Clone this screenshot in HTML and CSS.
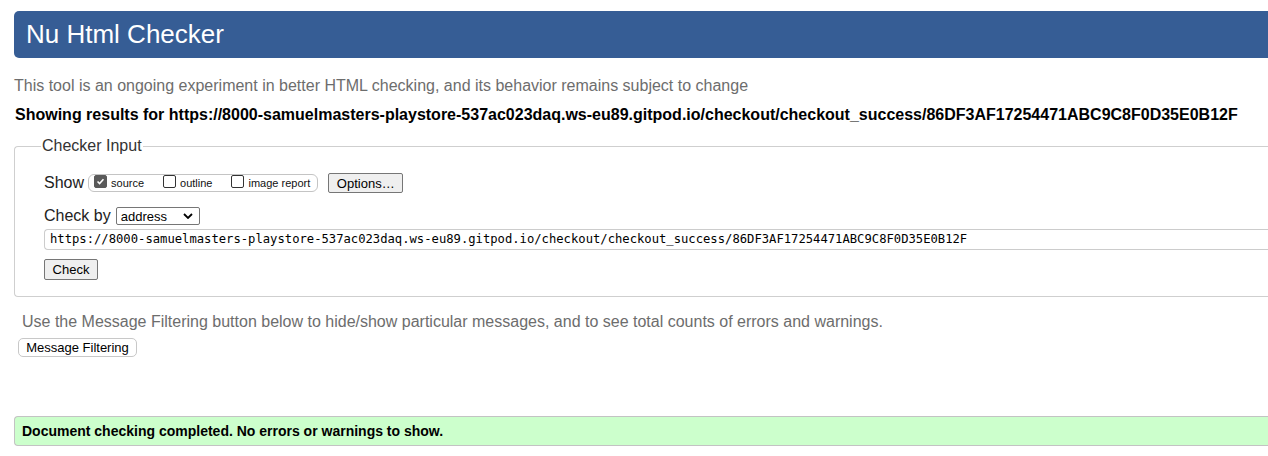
FILE: index.html
```html
<!DOCTYPE html>
<html lang="en">
<head>
<meta charset="utf-8">
<title>Nu Html Checker</title>
<link rel="stylesheet" href="styles.css">
</head>
<body>
<div class="page">
  <h1 class="banner">Nu Html Checker</h1>
  <p class="intro">This tool is an ongoing experiment in better HTML checking, and its behavior remains subject to change</p>
  <p class="results-for">Showing results for https://8000-samuelmasters-playstore-537ac023daq.ws-eu89.gitpod.io/checkout/checkout_success/86DF3AF17254471ABC9C8F0D35E0B12F</p>
  <fieldset class="checker-input">
    <legend class="legend">Checker Input</legend>
    <div class="row show-row">
      <span class="row-label">Show</span>
      <span class="opt-group">
        <label class="opt"><span class="cb checked"><svg viewBox="0 0 13 13" width="13" height="13"><path d="M3 6.6 L5.4 9 L10 3.8" fill="none" stroke="#fff" stroke-width="1.8"/></svg></span>source</label>
        <label class="opt"><span class="cb"></span>outline</label>
        <label class="opt last"><span class="cb"></span>image report</label>
      </span>
      <button class="btn options">Options…</button>
    </div>
    <div class="row checkby-row">
      <span class="row-label">Check by</span>
      <span class="select">address<svg class="chev" viewBox="0 0 10 6" width="10" height="6"><path d="M1 1 L5 5 L9 1" fill="none" stroke="#000" stroke-width="1.8"/></svg></span>
    </div>
    <div class="url">https://8000-samuelmasters-playstore-537ac023daq.ws-eu89.gitpod.io/checkout/checkout_success/86DF3AF17254471ABC9C8F0D35E0B12F</div>
    <button class="btn check">Check</button>
  </fieldset>
  <p class="filter-note">Use the Message Filtering button below to hide/show particular messages, and to see total counts of errors and warnings.</p>
  <button class="btn filter">Message Filtering</button>
  <div class="success">Document checking completed. No errors or warnings to show.</div>
</div>
</body>
</html>
```
FILE: styles.css
```css
html, body {
  margin: 0;
  padding: 0;
  overflow: hidden;
  background: #fff;
}
body {
  font-family: "Liberation Sans", Arial, sans-serif;
  color: #000;
}
.page {
  width: 1300px;
  padding: 11px 0 0 14px;
}
.banner {
  margin: 0;
  height: 47px;
  box-sizing: border-box;
  padding: 0 0 0 12px;
  background: #365d95;
  color: #fff;
  font-weight: normal;
  font-size: 26px;
  line-height: 47px;
  border-radius: 5px 0 0 5px;
}
.intro {
  margin: 18px 0 0 0;
  font-size: 16px;
  line-height: 20px;
  color: #6d6d6d;
}
.results-for {
  margin: 9px 0 0 1px;
  font-size: 16px;
  font-weight: bold;
  line-height: 20px;
}
.checker-input {
  margin: 12px 0 0 0;
  padding: 17px 0 16px 29px;
  border: 1px solid #cfcfcf;
  border-right: none;
  border-radius: 4px 0 0 4px;
  min-width: 0;
}
.legend {
  padding: 0 1px;
  margin-left: -3px;
  font-size: 16px;
  color: #333;
}
.row {
  display: flex;
  align-items: center;
}
.row-label {
  font-size: 16px;
  color: #222;
}
.show-row {
  height: 22px;
}
.opt-group {
  display: flex;
  align-items: center;
  margin-left: 4px;
  height: 18px;
  border: 1px solid #c4c4c4;
  border-radius: 6px;
  padding: 0 7px 0 5px;
  box-sizing: border-box;
}
.opt {
  display: flex;
  align-items: center;
  font-size: 11px;
  color: #111;
  margin-right: 19px;
}
.opt.last { margin-right: 0; }
.cb {
  width: 11px;
  height: 11px;
  border: 1px solid #333;
  border-radius: 2px;
  margin-right: 4px;
  margin-top: -3px;
  display: inline-flex;
  align-items: center;
  justify-content: center;
  background: #fff;
}
.cb.checked {
  background: #5a5a5a;
  border-color: #5a5a5a;
}
.cb svg { display: block; }
.btn {
  font-family: "Liberation Sans", Arial, sans-serif;
  background: #efefef;
  border: 1px solid #767676;
  border-radius: 2px;
  color: #000;
  padding: 0;
  cursor: pointer;
}
.options {
  margin-left: 10px;
  width: 75px;
  height: 20px;
  font-size: 13px;
}
.checkby-row {
  margin-top: 12px;
  height: 20px;
}
.select {
  margin-left: 5px;
  width: 84px;
  height: 18px;
  box-sizing: border-box;
  border: 1px solid #767676;
  border-radius: 2px;
  display: flex;
  align-items: center;
  justify-content: space-between;
  padding: 0 6px 0 4px;
  font-size: 13px;
  color: #000;
}
.chev { display: block; }
.url {
  margin-top: 3px;
  height: 21px;
  box-sizing: border-box;
  border: 1px solid #cccccc;
  border-right: none;
  border-radius: 4px 0 0 4px;
  padding: 0 0 0 5px;
  font-family: "DejaVu Sans Mono", "Liberation Mono", monospace;
  font-size: 12.2px;
  line-height: 19px;
  color: #000;
  white-space: nowrap;
}
.check {
  display: block;
  margin-top: 9px;
  width: 54px;
  height: 21px;
  font-size: 13px;
}
.filter-note {
  margin: 15px 0 0 8px;
  font-size: 16px;
  line-height: 20px;
  color: #6d6d6d;
}
.filter {
  display: block;
  margin: 6px 0 0 4px;
  height: 19px;
  width: 119px;
  font-size: 13px;
  background: #fff;
  border: 1px solid #c8c8c8;
  border-radius: 5px;
}
.success {
  margin-top: 59px;
  height: 30px;
  box-sizing: border-box;
  background: #ccffcc;
  border: 1px solid #c3c3c3;
  border-right: none;
  border-radius: 4px 0 0 4px;
  padding-left: 7px;
  font-size: 14px;
  font-weight: bold;
  line-height: 28px;
}
```
